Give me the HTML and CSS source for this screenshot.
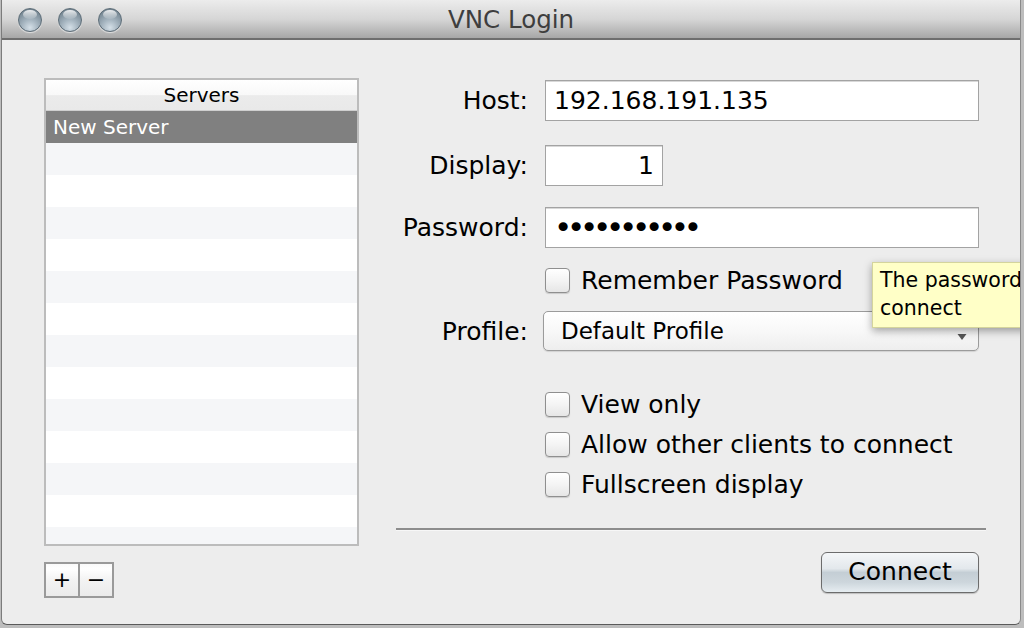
FILE: index.html
```html
<!DOCTYPE html>
<html>
<head>
<meta charset="utf-8">
<title>VNC Login</title>
<link rel="stylesheet" href="styles.css">
</head>
<body>
<div class="window">
  <div class="titlebar">
    <div class="lights">
      <span class="light"></span><span class="light"></span><span class="light"></span>
    </div>
    <div class="title">VNC Login</div>
    <div></div>
  </div>
  <div class="content">
    <div class="left">
      <div class="list">
        <div class="list-head">Servers</div>
        <div class="rows">
          <div class="row sel">New Server</div>
          <div class="row alt"></div>
          <div class="row"></div>
          <div class="row alt"></div>
          <div class="row"></div>
          <div class="row alt"></div>
          <div class="row"></div>
          <div class="row alt"></div>
          <div class="row"></div>
          <div class="row alt"></div>
          <div class="row"></div>
          <div class="row alt"></div>
          <div class="row"></div>
          <div class="row alt"></div>
        </div>
      </div>
      <div class="pm">
        <div class="pm-btn">+</div>
        <div class="pm-btn">&minus;</div>
      </div>
    </div>
    <div class="right">
      <div class="frow r-host">
        <label class="lbl">Host:</label>
        <div class="field wide">192.168.191.135</div>
      </div>
      <div class="frow r-disp">
        <label class="lbl">Display:</label>
        <div class="field narrow">1</div>
      </div>
      <div class="frow r-pass">
        <label class="lbl">Password:</label>
        <div class="field wide dots">•••••••••••</div>
      </div>
      <div class="frow r-rem">
        <span></span>
        <div class="check"><span class="box"></span><span>Remember Password</span></div>
      </div>
      <div class="frow r-prof">
        <label class="lbl">Profile:</label>
        <div class="select">
          <span>Default Profile</span>
          <svg class="arrows" width="12" height="24" viewBox="0 0 12 24"><path d="M2 9 L6 3 L10 9 Z" fill="#555"/><path d="M1.5 15 L10.5 15 L6 21 Z" fill="#555"/></svg>
        </div>
      </div>
      <div class="frow r-view">
        <span></span>
        <div class="check"><span class="box"></span><span>View only</span></div>
      </div>
      <div class="frow r-opt">
        <span></span>
        <div class="check"><span class="box"></span><span>Allow other clients to connect</span></div>
      </div>
      <div class="frow r-opt">
        <span></span>
        <div class="check"><span class="box"></span><span>Fullscreen display</span></div>
      </div>
      <div class="sep"></div>
      <div class="actions">
        <div class="btn">Connect</div>
      </div>
    </div>
    <div class="tooltip">
      <div>The password</div>
      <div>connect</div>
    </div>
  </div>
</div>
</body>
</html>
```

FILE: styles.css
```css
html, body {
  margin: 0;
  padding: 0;
}
body {
  width: 1024px;
  height: 628px;
  overflow: hidden;
  background: #bdbdbd;
  font-family: "DejaVu Sans", "Liberation Sans", sans-serif;
  color: #000;
}
.window {
  position: relative;
  box-sizing: border-box;
  margin-left: 1px;
  width: 1020px;
  height: 625px;
  background: #ededed;
  border-left: 1px solid #7c7c7c;
  border-right: 1px solid #8a8a8a;
  border-bottom: 1px solid #5a5a5a;
  border-radius: 0 0 6px 6px;
  overflow: hidden;
}
.titlebar {
  height: 38px;
  border-bottom: 2px solid #6e6e6e;
  background: linear-gradient(#ececec, #d6d6d6 50%, #a7a7a7);
  display: grid;
  grid-template-columns: 1fr auto 1fr;
  align-items: center;
}
.lights {
  display: flex;
  gap: 16px;
  padding-left: 16px;
  padding-top: 1px;
}
.light {
  width: 24px;
  height: 24px;
  border-radius: 50%;
  box-sizing: border-box;
  border: 1px solid #5d6d78;
  background: radial-gradient(circle at 50% 85%, #d5e0e8 0%, #a8b7c2 35%, #7f909c 70%, #6a7a86 100%);
  box-shadow: 0 1px 1px rgba(255,255,255,0.6);
  position: relative;
}
.light::after {
  content: "";
  position: absolute;
  left: 4px;
  top: 1px;
  width: 14px;
  height: 9px;
  border-radius: 50%;
  background: linear-gradient(rgba(255,255,255,0.85), rgba(255,255,255,0.1));
}
.title {
  font-size: 24.5px;
  color: #3e3e3e;
  padding-top: 1px;
}
.content {
  display: flex;
  padding: 38px 0 0 42px;
}
.left {
  width: 315px;
  display: flex;
  flex-direction: column;
}
.list {
  box-sizing: border-box;
  height: 468px;
  border: 2px solid #bcbcbc;
  background: #fff;
  overflow: hidden;
}
.list-head {
  height: 31px;
  box-sizing: border-box;
  border-bottom: 1px solid #cfcfcf;
  background: linear-gradient(#ffffff 0%, #f8f8f8 50%, #ebebeb 52%, #e9e9e9 100%);
  text-align: center;
  font-size: 20px;
  line-height: 30px;
}
.row {
  height: 32px;
  background: #fff;
  font-size: 20px;
  line-height: 32px;
  padding-left: 7px;
}
.row.alt {
  background: #f5f6f8;
}
.row.sel {
  background: #808080;
  color: #fff;
}
.pm {
  margin-top: 16px;
  display: flex;
  width: 70px;
  height: 36px;
  box-sizing: border-box;
  border: 2px solid #9a9a9a;
}
.pm-btn {
  flex: 1;
  background: linear-gradient(#fafafa, #ffffff 15%, #f3f3f3 50%, #ebebeb);
  text-align: center;
  font-size: 22px;
  line-height: 32px;
}
.pm-btn + .pm-btn {
  border-left: 2px solid #9a9a9a;
}
.right {
  margin-left: 37px;
  width: 590px;
  display: flex;
  flex-direction: column;
}
.frow {
  display: grid;
  grid-template-columns: 132px 434px;
  column-gap: 17px;
  align-items: center;
}
.lbl {
  text-align: right;
  font-size: 25px;
}
.r-host { margin-top: 2px; }
.r-disp { margin-top: 24px; }
.r-pass { margin-top: 21px; }
.r-rem { margin-top: 20px; }
.r-prof { margin-top: 18px; grid-template-columns: 132px 436px; column-gap: 15px; }
.r-view { margin-top: 41px; }
.r-opt { margin-top: 15px; }
.field {
  box-sizing: border-box;
  height: 41px;
  background: #fff;
  border: 1px solid #a3a3a3;
  box-shadow: inset 0 1px 0 #d8d8d8;
  font-size: 25px;
  line-height: 39px;
  padding: 0 8px;
  white-space: nowrap;
  overflow: hidden;
}
.field.narrow {
  width: 118px;
  text-align: right;
}
.field.dots {
  font-size: 31px;
  letter-spacing: -5.3px;
  line-height: 38px;
}
.check {
  display: flex;
  align-items: center;
  gap: 11px;
  font-size: 25px;
  height: 25px;
}
.box {
  width: 25px;
  height: 25px;
  box-sizing: border-box;
  border: 1px solid #8f8f8f;
  border-radius: 4px;
  background: linear-gradient(#ffffff, #f4f4f4 50%, #e6e6e6);
  box-shadow: 0 1px 1px rgba(0,0,0,0.15);
  flex: none;
}
.select {
  box-sizing: border-box;
  height: 40px;
  border: 1px solid #9b9b9b;
  border-radius: 5px;
  background: linear-gradient(#ffffff, #f8f8f8 50%, #eeeeee);
  box-shadow: 0 1px 1px rgba(0,0,0,0.12);
  display: flex;
  align-items: center;
  justify-content: space-between;
  padding: 0 10px 0 17px;
  font-size: 23px;
}
.arrows {
  display: block;
}
.sep {
  margin-top: 31px;
  height: 2px;
  background: #8d8d8d;
  border-bottom: 1px solid #f7f7f7;
}
.actions {
  display: flex;
  justify-content: flex-end;
  padding-right: 7px;
  margin-top: 21px;
}
.btn {
  box-sizing: border-box;
  width: 158px;
  height: 41px;
  border: 1px solid #6c6c6c;
  border-radius: 6px;
  background: linear-gradient(#f4f6f8 0%, #e3e8ec 40%, #c4ced5 50%, #cdd6dc 75%, #e6edf1 100%);
  box-shadow: 0 1px 1px rgba(0,0,0,0.2);
  text-align: center;
  font-size: 25px;
  line-height: 38px;
}
.tooltip {
  position: absolute;
  left: 870px;
  top: 262px;
  width: 170px;
  height: 66px;
  box-sizing: border-box;
  background: #ffffc7;
  border: 1px solid #d4d49c;
  box-shadow: 0 3px 8px rgba(0,0,0,0.35);
  padding: 3px 7px;
  font-size: 20.5px;
  line-height: 28px;
  white-space: nowrap;
}
```
